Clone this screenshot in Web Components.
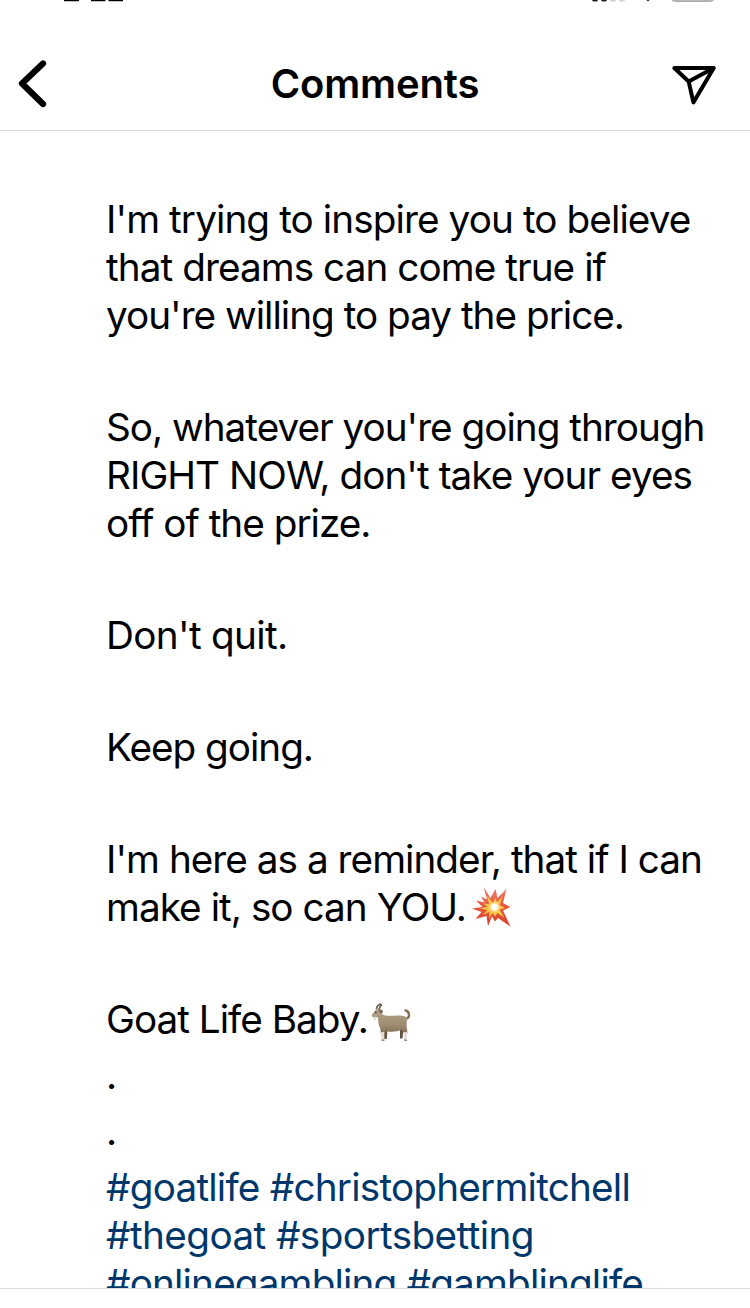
<!DOCTYPE html>
<html lang="en">
<head>
<meta charset="utf-8">
<meta name="viewport" content="width=device-width, initial-scale=1">
<title>Comments</title>
<style>
  body {
    margin: 0;
    background: #fff;
    font-family: Inter, "Liberation Sans", sans-serif;
  }
</style>
</head>
<body>
<comments-screen>
  <status-bar slot="status"></status-bar>
  <nav-header slot="header">Comments</nav-header>
  <comment-paragraph>
    <text-line data-width="584.5">I'm trying to inspire you to believe</text-line>
    <text-line data-width="500">that dreams can come true if</text-line>
    <text-line data-width="518">you're willing to pay the price.</text-line>
  </comment-paragraph>
  <comment-paragraph>
    <text-line data-width="598.5">So, whatever you're going through</text-line>
    <text-line data-width="586">RIGHT NOW, don't take your eyes</text-line>
    <text-line data-width="264.5">off of the prize.</text-line>
  </comment-paragraph>
  <comment-paragraph>
    <text-line data-width="181.5">Don't quit.</text-line>
  </comment-paragraph>
  <comment-paragraph>
    <text-line data-width="207">Keep going.</text-line>
  </comment-paragraph>
  <comment-paragraph>
    <text-line data-width="596">I'm here as a reminder, that if I can</text-line>
    <text-line data-width="360">make it, so can YOU.<burst-emoji slot="emoji"></burst-emoji></text-line>
  </comment-paragraph>
  <comment-paragraph>
    <text-line data-width="262">Goat Life Baby.<goat-emoji slot="emoji"></goat-emoji></text-line>
  </comment-paragraph>
  <comment-paragraph class="tight"><text-line>.</text-line></comment-paragraph>
  <comment-paragraph class="tight"><text-line>.</text-line></comment-paragraph>
  <comment-paragraph class="tight tags">
    <text-line data-width="524">#goatlife #christophermitchell</text-line>
    <text-line data-width="428">#thegoat #sportsbetting</text-line>
    <text-line data-width="537">#onlinegambling #gamblinglife</text-line>
  </comment-paragraph>
</comments-screen>

<script>
class BaseElement extends HTMLElement
{
  constructor()
  {
    super();
    this.attachShadow({mode: "open"});
    this.render();
  }

  render()
  {
    this.shadowRoot.innerHTML = `
      <style>${this.styleCSS()}</style>
      ${this.html()}
    `;
  }
}

class CommentsScreen extends BaseElement
{
  html()
  {
    return `
      <slot name="status"></slot>
      <slot name="header"></slot>
      <main><slot></slot></main>
      <footer></footer>
    `;
  }

  styleCSS()
  {
    return `
      :host {
        display: flex;
        flex-direction: column;
        width: 750px;
        height: 1308px;
        overflow: hidden;
        color: #000;
      }

      main {
        flex: 1;
        min-height: 0;
        overflow: hidden;
        box-sizing: border-box;
        padding: 64px 0 0 106px;
      }

      ::slotted(comment-paragraph) {
        margin-bottom: 64px;
      }

      ::slotted(.tight) {
        margin-top: -56px;
      }

      ::slotted(.tags) {
        color: #00376b;
      }

      footer {
        height: 19px;
        border-top: 1px solid #dbdbdb;
      }
    `;
  }
}

// only the lower edge of the status bar is still on screen
class StatusBar extends BaseElement
{
  html()
  {
    return `
      <svg width="750" height="3" viewBox="0 0 750 3" aria-hidden="true">
        <path d="M64 0h15v.8q0 .5-1 .5H65q-1 0-1-.5zM91 0h14.500v.8q0 .5-1 .5H92q-1 0-1-.5zM108.500 0H123v.8q0 .5-1 .5h-12.500q-1 0-1-.5z"/>
        <path fill="#222" d="M592 0h6q-.3 1.400-1.500 1.400h-3Q592.300 1.400 592 0zM601 0h6q-.3 1.400-1.500 1.400h-3Q601.300 1.400 601 0z"/>
        <path fill="#d0d0d0" d="M610 0h6q-.3 1.400-1.500 1.400h-3Q610.300 1.400 610 0zM619 0h6q-.3 1.400-1.500 1.400h-3Q619.300 1.400 619 0z"/>
        <path fill="#222" d="M646.500 0h3l-1.500 1.400z"/>
        <path fill="#b8b8b8" d="M672 0h41.500q-1 1.300-4 1.300h-33.500q-3 0-4-1.300z"/>
        <path fill="none" stroke="#8e8e8e" stroke-width=".7" d="M672 .3q1.500 1.200 4 1.200h33.500q2.500 0 4-1.200"/>
      </svg>
    `;
  }

  styleCSS()
  {
    return `
      :host { display: block; height: 38px; }
      svg { display: block; }
    `;
  }
}

class NavHeader extends BaseElement
{
  html()
  {
    return `
      <svg class="back" width="32" height="52" viewBox="0 0 32 52" role="img" aria-label="Back">
        <path d="M27 5.500 6 25.500l21 20.500"/>
      </svg>
      <h1><slot></slot></h1>
      <svg class="send" width="48" height="44" viewBox="0 0 48 44" role="img" aria-label="Share">
        <path d="M4.300 6H43.700L23.400 40.400 18.700 19.500zM18.700 19.500 43.700 6"/>
      </svg>
    `;
  }

  styleCSS()
  {
    return `
      :host {
        display: grid;
        grid-template-columns: 80px 1fr 80px;
        align-items: center;
        box-sizing: border-box;
        height: 93px;
        border-bottom: 1px solid #dbdbdb;
      }

      h1 {
        margin: 0;
        font-size: 40px;
        font-weight: 600;
        line-height: 92px;
        letter-spacing: -0.15px;
        text-align: center;
      }

      svg {
        fill: none;
        stroke: #000;
        stroke-linecap: round;
        stroke-linejoin: round;
      }

      .back {
        margin-left: 16px;
        stroke-width: 6.3;
      }

      .send {
        justify-self: end;
        margin-right: 32px;
        stroke-width: 4;
      }
    `;
  }
}

class CommentParagraph extends BaseElement
{
  html()
  {
    return `<slot></slot>`;
  }

  styleCSS()
  {
    return `
      :host { display: block; }
    `;
  }
}

class TextLine extends BaseElement
{
  connectedCallback()
  {
    this.fit();
  }

  // spreads the difference to data-width over the letters
  fit()
  {
    const width = parseFloat(this.dataset.width);
    if (!width) return;

    const span = this.shadowRoot.querySelector("span");
    const count = this.textContent.trim().length;
    const spacing = (width - span.getBoundingClientRect().width) / count;
    span.style.letterSpacing = `${spacing}px`;
  }

  html()
  {
    return `<span><slot></slot></span><slot name="emoji"></slot>`;
  }

  styleCSS()
  {
    return `
      :host {
        display: flex;
        height: 48px;
        font-size: 38.7px;
        line-height: 48px;
        white-space: nowrap;
      }
    `;
  }
}

class BurstEmoji extends BaseElement
{
  html()
  {
    return `
      <svg width="42" height="42" viewBox="0 0 42 42" role="img" aria-label="collision">
        <defs>
          <linearGradient id="red" x1="0" y1="0" x2="0" y2="1">
            <stop offset="0" stop-color="#e8806a"/>
            <stop offset=".5" stop-color="#e4573c"/>
            <stop offset="1" stop-color="#d8402a"/>
          </linearGradient>
          <radialGradient id="core">
            <stop offset=".4" stop-color="#fff"/>
            <stop offset="1" stop-color="#fff3a0" stop-opacity="0"/>
          </radialGradient>
        </defs>
        <path fill="url(#red)" d="M12.500 1 19.500 12 24.500 3 26.500 12 35.500 3 32 17 39.500 21 32 24.500 39.500 40.500 27 32 24 35.500 21 30.500 17 40 15.500 30 4.500 33 10.500 26 1 22.500 11.500 21 5 14.500 13.500 16.500 10 10.500 16 13.500z"/>
        <path fill="#fbc547" d="M16 9.500 22 17 24.500 12 26 16.500 31.500 10.500 28.500 19 34 22 28.500 23.500 33.500 32 26.500 27 24 30.500 21.500 27 18 32.500 18.500 26 11.500 29 16.500 24 9 22.500 16.500 20.500 12 17.500 18 18z"/>
        <circle cx="23.500" cy="21" r="6" fill="url(#core)"/>
      </svg>
    `;
  }

  styleCSS()
  {
    return `
      :host { display: block; margin-left: 4.500px; height: 42px; }
      svg { display: block; margin-top: 3px; }
    `;
  }
}

class GoatEmoji extends BaseElement
{
  html()
  {
    return `
      <svg width="42" height="42" viewBox="0 0 42 42" role="img" aria-label="goat">
        <defs>
          <linearGradient id="coat" x1="0" y1="0" x2="0" y2="1">
            <stop offset="0" stop-color="#b3a38a"/>
            <stop offset=".6" stop-color="#9f8e72"/>
            <stop offset="1" stop-color="#7d6b51"/>
          </linearGradient>
        </defs>
        <path fill="#635545" d="M15 27h3.500l-.7 10h-2.500zM31 26l3.500 1-1 9.500h-2.500z"/>
        <path fill="none" stroke="#857358" stroke-width="2.400" stroke-linecap="round" d="M36.500 17q4-1 3.500-4.500-.4-3.500-3.500-4"/>
        <path fill="url(#coat)" d="M2.500 13 7 7.500l4-1 2.500 2-.3 3.700c3 2.500 10.500 1.500 15.300 1.300 5-.3 8.500.3 9.500 3.500l-.5 6.500 1 7.500H35l-2.500-3.500c-4.500 2.500-12 2.700-16 1.500l-1 4H12l-.7-6.500C9 23 9.500 18 8.500 15L4 15.500z"/>
        <path fill="none" stroke="#6d6353" stroke-width="1.700" stroke-linecap="round" d="M7.500 6.500Q8 3 11.500 2M10 7Q11 4 12.500 3"/>
        <path fill="#725f48" d="M9.500 8.200 14 8.500l-1 2.700-2.500-.7z"/>
        <path fill="#e4dcd3" d="M12 30h3.300l-.3 7 .5 1h-3zM35 30h3l-.3 7 .5 1h-3zM4.300 15l2.500-.3.5 2-1.500 3z"/>
        <path fill="#9a8c7c" d="M12.500 37.500h2.800l.3 1.400h-3zM35.200 37.500H38l.3 1.400h-3z"/>
        <circle cx="6.800" cy="10.500" r=".8" fill="#252019"/>
      </svg>
    `;
  }

  styleCSS()
  {
    return `
      :host { display: block; margin-left: 1px; height: 42px; }
      svg { display: block; margin-top: 6.500px; }
    `;
  }
}

customElements.define("comments-screen", CommentsScreen);
customElements.define("status-bar", StatusBar);
customElements.define("nav-header", NavHeader);
customElements.define("comment-paragraph", CommentParagraph);
customElements.define("text-line", TextLine);
customElements.define("burst-emoji", BurstEmoji);
customElements.define("goat-emoji", GoatEmoji);
</script>
</body>
</html>
